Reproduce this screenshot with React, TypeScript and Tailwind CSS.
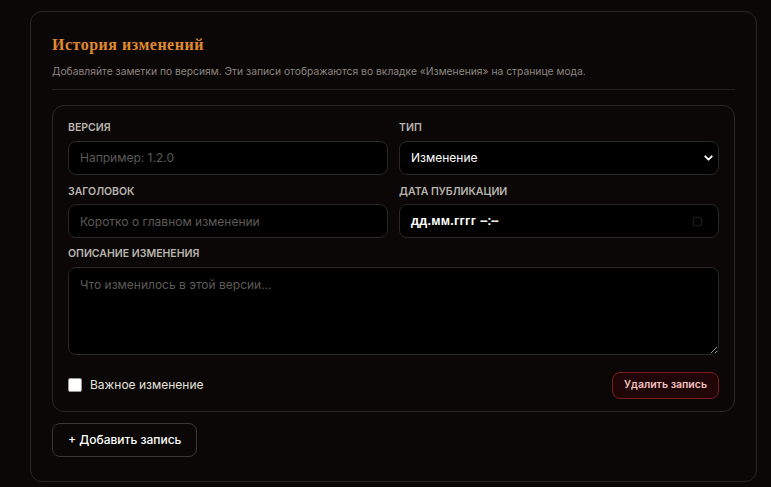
import { ChevronDown } from 'lucide-react'

const sans = { fontFamily: 'Inter, "Noto Sans", sans-serif' }

const Label = ({ children }: { children: React.ReactNode }) => (
  <span className="mb-[7px] block text-[10.5px] font-semibold uppercase leading-none text-[#b9b4af]">
    {children}
  </span>
)

const fieldBase =
  'h-[34px] w-full rounded-lg border border-[#2a2725] bg-black px-[11px] text-[12px] text-white outline-none placeholder:text-[#5e5a57]'

export default function App() {
  return (
    <div className="min-h-[487px] bg-[#0a0706] pl-[30px] pr-[14px] pt-[11px]" style={sans}>
      <section className="rounded-xl border border-[#2a2623] bg-[#0a0706] px-[21px] pb-[24px] pt-[25px]">
        {/* Header */}
        <h2
          className="text-[16px] font-bold leading-none tracking-[0.5px] text-[#e08a2e]"
          style={{ fontFamily: '"Liberation Serif", "DejaVu Serif", serif' }}
        >
          История изменений
        </h2>
        <p className="mt-[13px] text-[10.3px] leading-none text-[#8a8480]">
          Добавляйте заметки по версиям. Эти записи отображаются во вкладке «Изменения» на странице мода.
        </p>
        <div className="mt-[13px] h-px bg-[#231f1d]" />

        {/* Entry card */}
        <div className="mt-[15px] rounded-xl border border-[#2a2623] px-[15px] pb-[12px] pt-[17px]">
          <div className="grid grid-cols-2 gap-x-[11px] gap-y-[12px]">
            <label className="block">
              <Label>Версия</Label>
              <input className={fieldBase} placeholder="Например: 1.2.0" />
            </label>
            <label className="block">
              <Label>Тип</Label>
              <div className="relative">
                <select className={`${fieldBase} appearance-none text-[12.5px]`} defaultValue="change">
                  <option value="change">Изменение</option>
                  <option value="fix">Исправление</option>
                  <option value="feature">Новое</option>
                </select>
                <ChevronDown
                  className="pointer-events-none absolute right-[4px] top-1/2 h-[13px] w-[13px] -translate-y-1/2 text-white"
                  strokeWidth={3.5}
                />
              </div>
            </label>
            <label className="block">
              <Label>Заголовок</Label>
              <input className={fieldBase} placeholder="Коротко о главном изменении" />
            </label>
            <label className="block">
              <Label>Дата публикации</Label>
              <div className={`${fieldBase} flex items-center justify-between`}>
                <span
                  className="text-[12.5px] font-bold tracking-[0.3px] text-white"
                  style={{ fontFamily: '"Liberation Sans", Arial, sans-serif' }}
                >
                  дд.мм.гггг <span className="tracking-[-0.5px]">--:--</span>
                </span>
                <svg viewBox="0 0 16 16" className="mr-[4px] h-[11px] w-[11px] text-[#1c1a19]" fill="none" stroke="currentColor" strokeWidth="2">
                  <rect x="2" y="2" width="12" height="12" rx="3" />
                </svg>
              </div>
            </label>
          </div>

          <label className="mt-[11px] block">
            <Label>Описание изменения</Label>
            <textarea
              className="block h-[88px] w-full resize-y rounded-lg border border-[#2a2725] bg-black px-[11px] py-[8px] text-[12px] text-white outline-none placeholder:text-[#5e5a57]"
              placeholder="Что изменилось в этой версии..."
            />
          </label>

          <div className="mt-[17px] flex items-center justify-between">
            <label className="flex items-center gap-[8px] text-[12px] text-[#e6e2de]">
              <span className="h-[14px] w-[14px] rounded-[2px] border border-[#9b9896] bg-white" />
              Важное изменение
            </label>
            <button className="h-[27px] rounded-lg border border-[#7a1b1b] bg-[#200606] px-[11px] text-[10.5px] font-semibold text-[#f2c0c0]">
              Удалить запись
            </button>
          </div>
        </div>

        <button className="mt-[11px] h-[34px] rounded-lg border border-[#3a3532] px-[15px] text-[12px] font-medium text-white">
          + Добавить запись
        </button>
      </section>
    </div>
  )
}
